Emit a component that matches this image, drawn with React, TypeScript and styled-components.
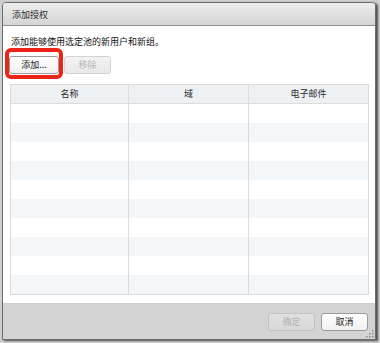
import React from "react";
import styled, { createGlobalStyle } from "styled-components";

const Global = createGlobalStyle`
  html, body {
    margin: 0;
    padding: 0;
    width: 380px;
    height: 343px;
    overflow: hidden;
    background: #cfcfcf;
    font-family: "Noto Sans CJK SC", "Noto Sans", sans-serif;
  }
`;

const Page = styled.div`
  padding: 2px 0 0 2px;
`;

const Dialog = styled.div`
  position: relative;
  box-sizing: border-box;
  width: 374px;
  height: 338px;
  display: flex;
  flex-direction: column;
  background: #ffffff;
  border: 1px solid #6c6c6c;
  border-radius: 4px 4px 0 0;
  box-shadow: 2px 1px 2px rgba(40, 40, 40, 0.75);
  overflow: hidden;
`;

const TitleBar = styled.div`
  height: 22px;
  flex: none;
  display: flex;
  align-items: center;
  padding-left: 9px;
  background: linear-gradient(#ededed, #d5d5d5);
  border-bottom: 1px solid #8e8e8e;
  font-size: 9px;
  color: #2a2a2a;
`;

const Body = styled.div`
  flex: 1;
  display: flex;
  flex-direction: column;
  padding: 10px 6px 0 7px;
`;

const Description = styled.div`
  font-size: 9px;
  line-height: 12px;
  color: #111;
  padding-left: 1px;
`;

const ButtonRow = styled.div`
  display: flex;
  gap: 5px;
  margin-top: 8px;
  margin-left: -1px;
`;

const Highlight = styled.div`
  position: relative;
  display: flex;
  &::after {
    content: "";
    position: absolute;
    left: -4px;
    right: -4px;
    top: -8px;
    bottom: -5px;
    border: 4px solid #ec2418;
    border-radius: 6px;
    pointer-events: none;
  }
`;

const Button = styled.button<{ $w: number; $footer?: boolean }>`
  box-sizing: border-box;
  width: ${(p) => p.$w}px;
  height: 18px;
  padding: 0;
  font-family: inherit;
  font-size: 9px;
  line-height: 16px;
  border-radius: 3px;
  color: #1a1a1a;
  background: linear-gradient(#ffffff, #f1f1f1);
  border: 1px solid #9c9c9c;
  &:disabled {
    color: #b4b4b4;
    background: ${(p) =>
      p.$footer ? "linear-gradient(#e0e0e0, #d9d9d9)" : "linear-gradient(#f3f3f3, #e9e9e9)"};
    border-color: ${(p) => (p.$footer ? "#c3c3c3" : "#d2d2d2")};
  }
`;

const Table = styled.div`
  margin-top: 10px;
  border: 1px solid #dadada;
  display: grid;
  grid-template-columns: 118px 120px 1fr;
`;

const HeadCell = styled.div<{ $last?: boolean }>`
  height: 18px;
  line-height: 18px;
  text-align: center;
  font-size: 9px;
  color: #2a2a2a;
  background: #eef1f4;
  border-bottom: 1px solid #dcdcdc;
  border-right: ${(p) => (p.$last ? "none" : "1px solid #dcdcdc")};
`;

const Cell = styled.div<{ $alt: boolean; $last?: boolean }>`
  height: 19px;
  background: ${(p) => (p.$alt ? "#f4f7fa" : "#ffffff")};
  border-right: ${(p) => (p.$last ? "none" : "1px solid #dcdcdc")};
`;

const Footer = styled.div`
  height: 35px;
  flex: none;
  display: flex;
  align-items: center;
  justify-content: flex-end;
  gap: 6px;
  padding-right: 7px;
  background: #d4d4d4;
  border-top: 1px solid #cdcdcd;
`;

const Grip = styled.svg`
  position: absolute;
  right: 1px;
  bottom: 1px;
`;

const columns = ["名称", "域", "电子邮件"];

export default function App() {
  const rows = Array.from({ length: 10 }, (_, i) => i);
  return (
    <>
      <Global />
      <Page>
        <Dialog>
          <TitleBar>添加授权</TitleBar>
          <Body>
            <Description>添加能够使用选定池的新用户和新组。</Description>
            <ButtonRow>
              <Highlight>
                <Button $w={50}>添加...</Button>
              </Highlight>
              <Button $w={47} disabled>
                移除
              </Button>
            </ButtonRow>
            <Table>
              {columns.map((c, i) => (
                <HeadCell key={c} $last={i === 2}>
                  {c}
                </HeadCell>
              ))}
              {rows.map((r) =>
                columns.map((c, i) => (
                  <Cell key={`${r}-${c}`} $alt={r % 2 === 1} $last={i === 2} />
                ))
              )}
            </Table>
          </Body>
          <Footer>
            <Button $w={47} $footer disabled>
              确定
            </Button>
            <Button $w={47} $footer>
              取消
            </Button>
          </Footer>
          <Grip width="8" height="8" viewBox="0 0 8 8">
            <rect x="6" y="0" width="1.5" height="1.5" fill="#8a8a8a" />
            <rect x="3" y="3" width="1.5" height="1.5" fill="#8a8a8a" />
            <rect x="6" y="3" width="1.5" height="1.5" fill="#8a8a8a" />
            <rect x="0" y="6" width="1.5" height="1.5" fill="#8a8a8a" />
            <rect x="3" y="6" width="1.5" height="1.5" fill="#8a8a8a" />
            <rect x="6" y="6" width="1.5" height="1.5" fill="#8a8a8a" />
          </Grip>
        </Dialog>
      </Page>
    </>
  );
}
